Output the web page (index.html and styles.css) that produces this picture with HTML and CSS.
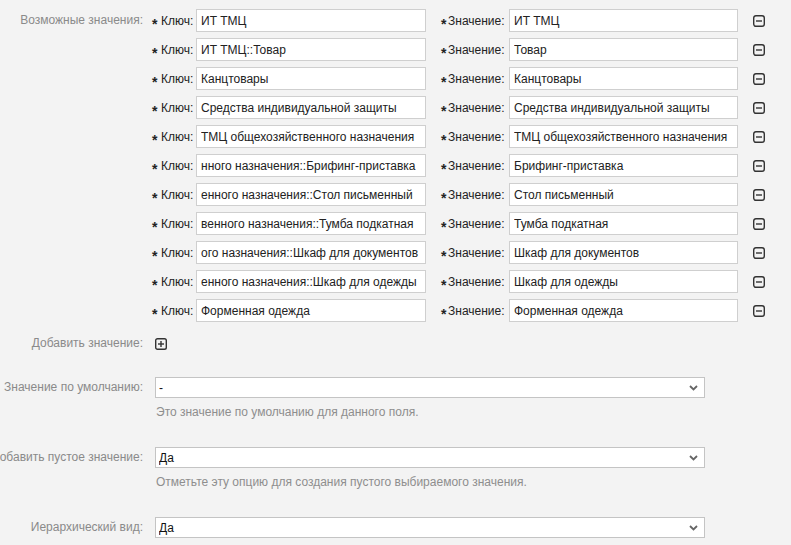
FILE: index.html
```html
<!DOCTYPE html>
<html lang="ru">
<head>
<meta charset="utf-8">
<title>Поле</title>
<link rel="stylesheet" href="styles.css">
</head>
<body>
<div class="form">
  <div class="field">
    <div class="label"><span>Возможные значения:</span></div>
    <div class="pairs">
      <div class="pair">
        <span class="req">*</span><span class="k">Ключ:</span><div class="txt"><div class="clip"><span>ИТ ТМЦ</span></div></div>
        <span class="req req2">*</span><span class="k kv">Значение:</span><div class="txt tv"><div class="clip"><span>ИТ ТМЦ</span></div></div>
        <span class="btn"><svg width="12" height="12" viewBox="0 0 12 12"><rect x="0.7" y="0.7" width="10.6" height="10.6" rx="2.2" fill="none" stroke="#333" stroke-width="1.4"/><line x1="3" y1="6" x2="9" y2="6" stroke="#333" stroke-width="1.4"/></svg></span>
      </div>
      <div class="pair">
        <span class="req">*</span><span class="k">Ключ:</span><div class="txt"><div class="clip"><span>ИТ ТМЦ::Товар</span></div></div>
        <span class="req req2">*</span><span class="k kv">Значение:</span><div class="txt tv"><div class="clip"><span>Товар</span></div></div>
        <span class="btn"><svg width="12" height="12" viewBox="0 0 12 12"><rect x="0.7" y="0.7" width="10.6" height="10.6" rx="2.2" fill="none" stroke="#333" stroke-width="1.4"/><line x1="3" y1="6" x2="9" y2="6" stroke="#333" stroke-width="1.4"/></svg></span>
      </div>
      <div class="pair">
        <span class="req">*</span><span class="k">Ключ:</span><div class="txt"><div class="clip"><span>Канцтовары</span></div></div>
        <span class="req req2">*</span><span class="k kv">Значение:</span><div class="txt tv"><div class="clip"><span>Канцтовары</span></div></div>
        <span class="btn"><svg width="12" height="12" viewBox="0 0 12 12"><rect x="0.7" y="0.7" width="10.6" height="10.6" rx="2.2" fill="none" stroke="#333" stroke-width="1.4"/><line x1="3" y1="6" x2="9" y2="6" stroke="#333" stroke-width="1.4"/></svg></span>
      </div>
      <div class="pair">
        <span class="req">*</span><span class="k">Ключ:</span><div class="txt"><div class="clip"><span>Средства индивидуальной защиты</span></div></div>
        <span class="req req2">*</span><span class="k kv">Значение:</span><div class="txt tv"><div class="clip"><span>Средства индивидуальной защиты</span></div></div>
        <span class="btn"><svg width="12" height="12" viewBox="0 0 12 12"><rect x="0.7" y="0.7" width="10.6" height="10.6" rx="2.2" fill="none" stroke="#333" stroke-width="1.4"/><line x1="3" y1="6" x2="9" y2="6" stroke="#333" stroke-width="1.4"/></svg></span>
      </div>
      <div class="pair">
        <span class="req">*</span><span class="k">Ключ:</span><div class="txt"><div class="clip"><span>ТМЦ общехозяйственного назначения</span></div></div>
        <span class="req req2">*</span><span class="k kv">Значение:</span><div class="txt tv"><div class="clip"><span>ТМЦ общехозяйственного назначения</span></div></div>
        <span class="btn"><svg width="12" height="12" viewBox="0 0 12 12"><rect x="0.7" y="0.7" width="10.6" height="10.6" rx="2.2" fill="none" stroke="#333" stroke-width="1.4"/><line x1="3" y1="6" x2="9" y2="6" stroke="#333" stroke-width="1.4"/></svg></span>
      </div>
      <div class="pair">
        <span class="req">*</span><span class="k">Ключ:</span><div class="txt"><div class="clip end"><span>нного назначения::Брифинг-приставка</span></div></div>
        <span class="req req2">*</span><span class="k kv">Значение:</span><div class="txt tv"><div class="clip"><span>Брифинг-приставка</span></div></div>
        <span class="btn"><svg width="12" height="12" viewBox="0 0 12 12"><rect x="0.7" y="0.7" width="10.6" height="10.6" rx="2.2" fill="none" stroke="#333" stroke-width="1.4"/><line x1="3" y1="6" x2="9" y2="6" stroke="#333" stroke-width="1.4"/></svg></span>
      </div>
      <div class="pair">
        <span class="req">*</span><span class="k">Ключ:</span><div class="txt"><div class="clip end"><span>енного назначения::Стол письменный</span></div></div>
        <span class="req req2">*</span><span class="k kv">Значение:</span><div class="txt tv"><div class="clip"><span>Стол письменный</span></div></div>
        <span class="btn"><svg width="12" height="12" viewBox="0 0 12 12"><rect x="0.7" y="0.7" width="10.6" height="10.6" rx="2.2" fill="none" stroke="#333" stroke-width="1.4"/><line x1="3" y1="6" x2="9" y2="6" stroke="#333" stroke-width="1.4"/></svg></span>
      </div>
      <div class="pair">
        <span class="req">*</span><span class="k">Ключ:</span><div class="txt"><div class="clip end"><span>венного назначения::Тумба подкатная</span></div></div>
        <span class="req req2">*</span><span class="k kv">Значение:</span><div class="txt tv"><div class="clip"><span>Тумба подкатная</span></div></div>
        <span class="btn"><svg width="12" height="12" viewBox="0 0 12 12"><rect x="0.7" y="0.7" width="10.6" height="10.6" rx="2.2" fill="none" stroke="#333" stroke-width="1.4"/><line x1="3" y1="6" x2="9" y2="6" stroke="#333" stroke-width="1.4"/></svg></span>
      </div>
      <div class="pair">
        <span class="req">*</span><span class="k">Ключ:</span><div class="txt"><div class="clip end"><span>ого назначения::Шкаф для документов</span></div></div>
        <span class="req req2">*</span><span class="k kv">Значение:</span><div class="txt tv"><div class="clip"><span>Шкаф для документов</span></div></div>
        <span class="btn"><svg width="12" height="12" viewBox="0 0 12 12"><rect x="0.7" y="0.7" width="10.6" height="10.6" rx="2.2" fill="none" stroke="#333" stroke-width="1.4"/><line x1="3" y1="6" x2="9" y2="6" stroke="#333" stroke-width="1.4"/></svg></span>
      </div>
      <div class="pair">
        <span class="req">*</span><span class="k">Ключ:</span><div class="txt"><div class="clip end"><span>енного назначения::Шкаф для одежды</span></div></div>
        <span class="req req2">*</span><span class="k kv">Значение:</span><div class="txt tv"><div class="clip"><span>Шкаф для одежды</span></div></div>
        <span class="btn"><svg width="12" height="12" viewBox="0 0 12 12"><rect x="0.7" y="0.7" width="10.6" height="10.6" rx="2.2" fill="none" stroke="#333" stroke-width="1.4"/><line x1="3" y1="6" x2="9" y2="6" stroke="#333" stroke-width="1.4"/></svg></span>
      </div>
      <div class="pair">
        <span class="req">*</span><span class="k">Ключ:</span><div class="txt"><div class="clip"><span>Форменная одежда</span></div></div>
        <span class="req req2">*</span><span class="k kv">Значение:</span><div class="txt tv"><div class="clip"><span>Форменная одежда</span></div></div>
        <span class="btn"><svg width="12" height="12" viewBox="0 0 12 12"><rect x="0.7" y="0.7" width="10.6" height="10.6" rx="2.2" fill="none" stroke="#333" stroke-width="1.4"/><line x1="3" y1="6" x2="9" y2="6" stroke="#333" stroke-width="1.4"/></svg></span>
      </div>
    </div>
  </div>

  <div class="field add">
    <div class="label"><span>Добавить значение:</span></div>
    <div class="addval">
      <span class="btn plus"><svg width="12" height="12" viewBox="0 0 12 12"><rect x="0.7" y="0.7" width="10.6" height="10.6" rx="1.8" fill="none" stroke="#333" stroke-width="1.4"/><line x1="3" y1="6" x2="9" y2="6" stroke="#333" stroke-width="1.4"/><line x1="6" y1="3" x2="6" y2="9" stroke="#333" stroke-width="1.4"/></svg></span>
    </div>
  </div>

  <div class="field sel first">
    <div class="label"><span>Значение по умолчанию:</span></div>
    <div class="selcol">
      <div class="selwrap">
        <select class="select"><option>-</option></select>
        <svg class="chev" width="9" height="6" viewBox="0 0 9 6"><path d="M1 1 L4.5 4.5 L8 1" fill="none" stroke="#666" stroke-width="1.8"/></svg>
      </div>
      <div class="hint">Это значение по умолчанию для данного поля.</div>
    </div>
  </div>

  <div class="field sel">
    <div class="label"><span>Добавить пустое значение:</span></div>
    <div class="selcol">
      <div class="selwrap">
        <select class="select"><option>Да</option></select>
        <svg class="chev" width="9" height="6" viewBox="0 0 9 6"><path d="M1 1 L4.5 4.5 L8 1" fill="none" stroke="#666" stroke-width="1.8"/></svg>
      </div>
      <div class="hint">Отметьте эту опцию для создания пустого выбираемого значения.</div>
    </div>
  </div>

  <div class="field sel">
    <div class="label"><span>Иерархический вид:</span></div>
    <div class="selcol">
      <div class="selwrap">
        <select class="select"><option>Да</option></select>
        <svg class="chev" width="9" height="6" viewBox="0 0 9 6"><path d="M1 1 L4.5 4.5 L8 1" fill="none" stroke="#666" stroke-width="1.8"/></svg>
      </div>
    </div>
  </div>
</div>
</body>
</html>
```

FILE: styles.css
```css
html, body {
  margin: 0;
  background: #f3f3f3;
}
body {
  font-family: "Liberation Sans", Arial, sans-serif;
  font-size: 12px;
  color: #333;
  overflow: hidden;
}
.form {
  padding-top: 9px;
}
.field {
  display: grid;
  grid-template-columns: 143px 1fr;
  column-gap: 9px;
}
.label {
  display: flex;
  justify-content: flex-end;
  white-space: nowrap;
  color: #8a8a8a;
  line-height: 23px;
  height: 23px;
}
.pairs {
  display: flex;
  flex-direction: column;
  gap: 6px;
}
.pair {
  display: flex;
  align-items: center;
  height: 23px;
}
.req {
  width: 9px;
  flex: none;
  font-weight: bold;
  font-size: 14px;
  line-height: 14px;
  padding-top: 7px;
  color: #222;
}
.req2 {
  width: 7px;
  margin-left: 15px;
}
.k {
  width: 35px;
  flex: none;
  color: #222;
}
.kv {
  width: 61px;
}
.txt {
  box-sizing: border-box;
  width: 230px;
  height: 23px;
  flex: none;
  display: flex;
  align-items: center;
  background: #fff;
  border: 1px solid #cfcfcf;
  padding: 0 3px 0 4px;
  color: #222;
}
.clip {
  flex: 1;
  min-width: 0;
  display: flex;
  justify-content: flex-start;
  overflow: hidden;
  white-space: nowrap;
}
.clip span {
  flex: none;
}
.tv {
  width: 229px;
}
.btn {
  display: flex;
  width: 12px;
  height: 12px;
  flex: none;
  margin-left: 15px;
}
.add {
  margin-top: 10px;
}
.addval {
  display: flex;
  align-items: center;
  height: 23px;
}
.btn.plus {
  margin-left: 3px;
}
.sel {
  margin-top: 27px;
}
.sel.first {
  margin-top: 22px;
}
.sel .label {
  height: 21px;
  line-height: 21px;
}
.selcol {
  padding-left: 3px;
}
.selwrap {
  position: relative;
  width: 550px;
}
.select {
  -webkit-appearance: none;
  appearance: none;
  box-sizing: border-box;
  display: block;
  width: 100%;
  height: 21px;
  margin: 0;
  padding: 0 3px;
  background: #fff;
  border: 1px solid #c4c4c4;
  border-radius: 0;
  font-family: "Liberation Sans", Arial, sans-serif;
  font-size: 12px;
  color: #111;
  outline: none;
}
.chev {
  position: absolute;
  right: 7px;
  top: 8px;
  pointer-events: none;
}
.hint {
  margin-top: 6px;
  line-height: 16px;
  color: #8e8e8e;
  padding-left: 1px;
}
```
